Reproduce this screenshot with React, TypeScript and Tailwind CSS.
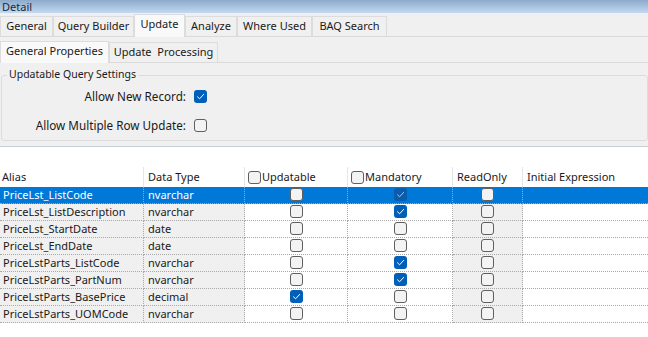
import React from 'react';

type Row = { alias: string; type: string; upd: boolean; mand: boolean };

const rows: Row[] = [
  { alias: 'PriceLst_ListCode', type: 'nvarchar', upd: false, mand: true },
  { alias: 'PriceLst_ListDescription', type: 'nvarchar', upd: false, mand: true },
  { alias: 'PriceLst_StartDate', type: 'date', upd: false, mand: false },
  { alias: 'PriceLst_EndDate', type: 'date', upd: false, mand: false },
  { alias: 'PriceLstParts_ListCode', type: 'nvarchar', upd: false, mand: true },
  { alias: 'PriceLstParts_PartNum', type: 'nvarchar', upd: false, mand: true },
  { alias: 'PriceLstParts_BasePrice', type: 'decimal', upd: true, mand: false },
  { alias: 'PriceLstParts_UOMCode', type: 'nvarchar', upd: false, mand: false },
];

const tabs = [
  { label: 'General', w: 'w-[53px]' },
  { label: 'Query Builder', w: 'w-[81px]' },
  { label: 'Update', w: 'w-[51px]', active: true },
  { label: 'Analyze', w: 'w-[52px]' },
  { label: 'Where Used', w: 'w-[75px]' },
  { label: 'BAQ Search', w: 'w-[75px]' },
];

function Check({ checked, dim }: { checked?: boolean; dim?: boolean }) {
  if (checked) {
    return (
      <div className={`w-[13px] h-[13px] shrink-0 rounded-[3px] flex items-center justify-center ${dim ? 'bg-[#0b5cad]' : 'bg-[#005fb8]'}`}>
        <svg width="9" height="9" viewBox="0 0 9 9" fill="none">
          <path d="M1.5 4.8 L3.6 6.8 L7.6 2.4" stroke={dim ? '#a9c6e6' : '#ffffff'} strokeWidth="1" strokeLinecap="round" strokeLinejoin="round" />
        </svg>
      </div>
    );
  }
  return <div className="w-[13px] h-[13px] shrink-0 rounded-[3px] border border-[#5f5f5f] bg-[#f3f3f3]" />;
}

export default function App() {
  return (
    <div className="w-[648px] h-[337px] bg-white overflow-hidden text-[11px] text-[#1a1a1a] whitespace-nowrap" style={{ fontFamily: '"Noto Sans", "Liberation Sans", sans-serif' }}>
      {/* Title */}
      <div className="h-[13px] bg-gradient-to-b from-[#8eaacb] to-[#c2d9f1] pl-[2px] leading-[13px] text-[11px] text-[#1d2a3a]">Detail</div>

      <div className="bg-[#f0f0f0] border-b border-[#c9ced4]">
        {/* Main tabs */}
        <div className="h-[24px] flex items-end border-b border-[#dadada]">
          {tabs.map((t) => (
            <div
              key={t.label}
              className={`${t.w} flex items-center justify-center border border-[#dcdcdc] border-b-0 ${
                t.active ? 'h-[23px] bg-[#f9f9f9] -mb-px pb-[3px]' : 'h-[20px] bg-[#f0f0f0]'
              }`}
            >
              {t.label}
            </div>
          ))}
        </div>

        {/* Sub tabs */}
        <div className="h-[26px] flex items-end border-b border-[#dadada]">
          <div className="w-[109px] h-[22px] bg-[#f9f9f9] border border-[#dcdcdc] border-b-0 -mb-px flex items-center justify-center pb-[3px]">
            General Properties
          </div>
          <div className="w-[109px] h-[20px] border border-[#dcdcdc] border-b-0 flex items-center justify-center">
            Update&nbsp; Processing
          </div>
        </div>

        {/* Group box */}
        <div className="pt-[4px] pb-[5px] pl-px">
          <div className="relative h-[66px] mt-[8px] border border-[#dcdcdc] rounded-[3px]">
            <div className="absolute -top-[9px] left-[5px] px-[2px] bg-[#f0f0f0] leading-[15px] text-[10.5px]">Updatable Query Settings</div>
            <div className="flex flex-col pt-[14px] gap-[16px] text-[11.7px]">
              <div className="flex items-center justify-end w-[205px] gap-[8px] h-[13px]">
                <span>Allow New Record:</span>
                <Check checked />
              </div>
              <div className="flex items-center justify-end w-[205px] gap-[8px] h-[13px]">
                <span>Allow Multiple Row Update:</span>
                <Check />
              </div>
            </div>
          </div>
        </div>
      </div>

      {/* Grid */}
      <div className="mt-[20px]">
        <div className="grid grid-cols-[144px_101px_103px_105px_70px_1fr] h-[20px] items-center">
          <div className="pl-[2px] border-r border-[#e6e6e6] h-full flex items-center">Alias</div>
          <div className="pl-[4px] border-r border-[#e6e6e6] h-full flex items-center">Data Type</div>
          <div className="pl-[3px] border-r border-[#e6e6e6] h-full flex items-center gap-[1px]">
            <Check />
            <span>Updatable</span>
          </div>
          <div className="pl-[3px] border-r border-[#e6e6e6] h-full flex items-center gap-[1px]">
            <Check />
            <span>Mandatory</span>
          </div>
          <div className="pl-[4px] border-r border-[#e6e6e6] h-full flex items-center">ReadOnly</div>
          <div className="pl-[4px] h-full flex items-center">Initial Expression</div>
        </div>
        {rows.map((r, i) => {
          const sel = i === 0;
          const cell = 'h-[17px] border-b border-r border-dotted border-[#a9a9a9]';
          return (
            <div key={r.alias} className={`grid grid-cols-[144px_101px_103px_105px_70px_1fr] ${sel ? 'bg-[#0078d7] text-white' : ''}`}>
              <div className={`${cell} pl-[3px] leading-[16px] ${sel ? '' : 'bg-[#f0f0f0]'}`}>{r.alias}</div>
              <div className={`${cell} pl-[4px] leading-[16px] ${sel ? '' : 'bg-[#f0f0f0]'}`}>{r.type}</div>
              <div className={`${cell} flex justify-center pt-px`}>
                <Check checked={r.upd} dim={sel} />
              </div>
              <div className={`${cell} flex justify-center pt-px`}>
                <Check checked={r.mand} dim={sel} />
              </div>
              <div className={`${cell} flex justify-center pt-px ${sel ? '' : 'bg-[#f0f0f0]'}`}>
                <Check />
              </div>
              <div className={`${cell} border-r-0`} />
            </div>
          );
        })}
      </div>
    </div>
  );
}
